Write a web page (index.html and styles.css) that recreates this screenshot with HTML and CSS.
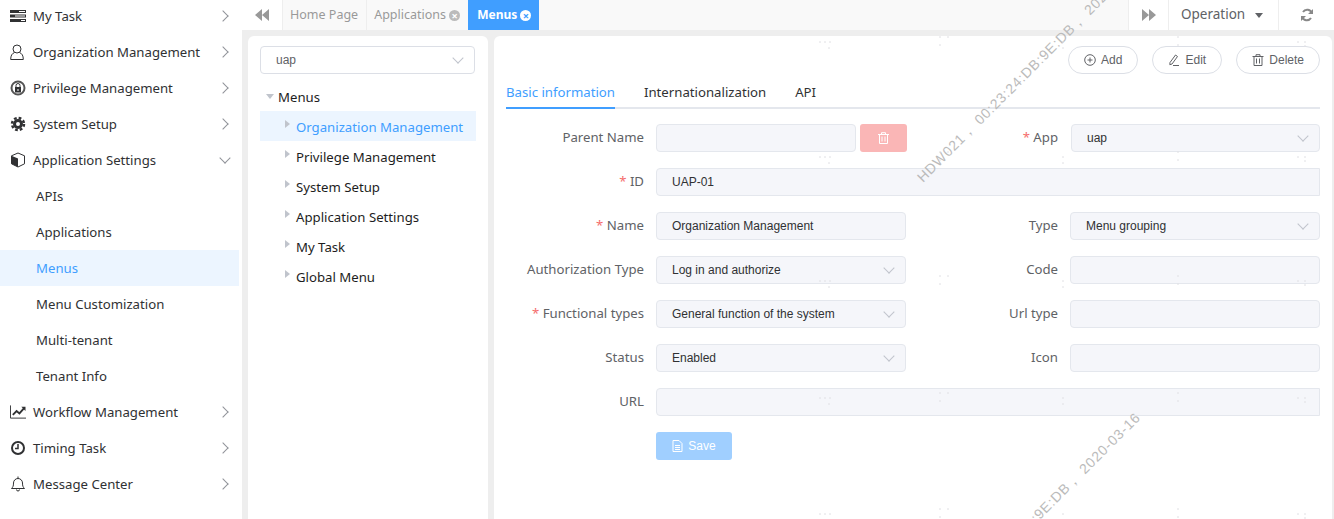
FILE: index.html

```html
<!DOCTYPE html>
<html>
<head>
    <title>Menus</title>
    <link rel="stylesheet" href="styles.css">
</head>
<body>
    <div class="sidebar">
        <div class="menu-item"><svg class="menu-icon" viewBox="0 0 16 14"><path d="M0 1h16v3H0zM0 5.500h16v3H0zM0 10h16v3H0z" fill="#303133"/><path d="M9 2h6v1H9zM5 6.500h10v1H5zM11 11h4v1h-4z" fill="#fff"/></svg><span>My Task</span><i class="arrow"></i></div>
        <div class="menu-item"><svg class="menu-icon" viewBox="0 0 16 16" fill="none" stroke="#303133"><circle cx="7" cy="5" r="4"/><path d="M4.500 8.500C2 9.500.7 11.500.7 15.500h12.600c0-4-1.300-6-3.800-7"/></svg><span>Organization Management</span><i class="arrow"></i></div>
        <div class="menu-item"><svg class="menu-icon" viewBox="0 0 16 16"><circle cx="8" cy="8" r="6.500" fill="none" stroke="#555" stroke-width="2"/><path d="M5 7h6v5.500H5z" fill="#303133"/><path d="M6 7V5.500a2 2 0 0 1 4 0V7" fill="none" stroke="#303133"/><path d="M7.500 9h1v2h-1z" fill="#fff"/></svg><span>Privilege Management</span><i class="arrow"></i></div>
        <div class="menu-item"><svg class="menu-icon" viewBox="0 0 16 16" fill="none" stroke="#303133"><circle cx="8" cy="8" r="3.500" stroke-width="3"/><circle cx="8" cy="8" r="6" stroke-width="2.500" stroke-dasharray="2.700 2"/></svg><span>System Setup</span><i class="arrow"></i></div>
        <div class="menu-item open"><svg class="menu-icon" viewBox="0 0 16 16"><path d="M8 1l6.500 2.800v8L8 15 1.500 11.800v-8z" fill="none" stroke="#303133"/><path d="M1.500 3.800L8 6.500V15L1.500 11.800z" fill="#303133"/></svg><span>Application Settings</span><i class="arrow"></i></div>
        <div class="menu-item sub">APIs</div>
        <div class="menu-item sub">Applications</div>
        <div class="menu-item sub active">Menus</div>
        <div class="menu-item sub">Menu Customization</div>
        <div class="menu-item sub">Multi-tenant</div>
        <div class="menu-item sub">Tenant Info</div>
        <div class="menu-item"><svg class="menu-icon" viewBox="0 0 17 14" fill="none" stroke="#303133"><path d="M.5 0v13.500H17"/><path d="M3 10l4-4 3 2.500L15 3" stroke-width="2"/><path d="M12 1.500h4.500V6z" fill="#303133" stroke="none"/></svg><span>Workflow Management</span><i class="arrow"></i></div>
        <div class="menu-item"><svg class="menu-icon" viewBox="0 0 16 16" fill="none" stroke="#303133"><circle cx="8" cy="8" r="6" stroke-width="2"/><path d="M8 4v4.500H5" stroke-width="1.500"/></svg><span>Timing Task</span><i class="arrow"></i></div>
        <div class="menu-item"><svg class="menu-icon" viewBox="0 0 16 16" fill="none" stroke="#303133"><path d="M1.500 12.500c1.500-1.500 2-2.500 2-5.500 0-2.500 2-4.500 4.500-4.500s4.500 2 4.500 4.500c0 3 .5 4 2 5.500z"/><path d="M8 .5v2M6.500 13.500a1.500 1.500 0 0 0 3 0"/></svg><span>Message Center</span><i class="arrow"></i></div>
    </div>

    <div class="main">
        <div class="topbar">
            <div class="top-btn first"><svg width="14" height="12" viewBox="0 0 14 12"><path d="M7 0v12L0 6zM14 0v12L7 6z" fill="#999"/></svg></div>
            <div class="tab">Home Page</div>
            <div class="tab">Applications <i class="tab-close">&times;</i></div>
            <div class="tab current">Menus <i class="tab-close">&times;</i></div>
            <div class="top-fill"></div>
            <div class="top-btn"><svg width="14" height="12" viewBox="0 0 14 12"><path d="M0 0v12l7-6zM7 0v12l7-6z" fill="#999"/></svg></div>
            <div class="top-btn operation">Operation <i class="caret"></i></div>
            <div class="top-btn refresh"><svg width="14" height="14" viewBox="0 0 14 14" fill="none" stroke="#888" stroke-width="2"><path d="M12 5.500A5 5 0 0 0 3 4M2 8.500A5 5 0 0 0 11 10"/><path d="M13 1v5H8zM1 13V8h5z" fill="#888" stroke="none"/></svg></div>
        </div>

        <div class="content">
            <div class="tree-panel">
                <div class="tree-select"><span>uap</span><i class="chevron"></i></div>
                <div class="tree-root"><i class="tri-down"></i>Menus</div>
                <div class="tree-row selected"><i class="tri"></i>Organization Management</div>
                <div class="tree-row"><i class="tri"></i>Privilege Management</div>
                <div class="tree-row"><i class="tri"></i>System Setup</div>
                <div class="tree-row"><i class="tri"></i>Application Settings</div>
                <div class="tree-row"><i class="tri"></i>My Task</div>
                <div class="tree-row"><i class="tri"></i>Global Menu</div>
            </div>

            <div class="form-panel">
                <div class="actions">
                    <div class="round-btn"><svg width="12" height="12" viewBox="0 0 12 12" fill="none" stroke="#606266"><circle cx="6" cy="6" r="5.300"/><path d="M6 3.500v5M3.500 6h5"/></svg>Add</div>
                    <div class="round-btn"><svg width="12" height="12" viewBox="0 0 12 12" fill="none" stroke="#606266"><path d="M2 8.500L7.500 1l2 1.500L4 10l-2.200.7zM5 11.500h6"/></svg>Edit</div>
                    <div class="round-btn"><svg width="12" height="12" viewBox="0 0 12 12" fill="none" stroke="#606266"><path d="M.5 2.500h11M4 2.500V.7h4v1.800M2 2.500v9h8v-9M4.500 4.500v5M7.500 4.500v5"/></svg>Delete</div>
                </div>
                <div class="tabs">
                    <div class="tabs-item current">Basic information</div>
                    <div class="tabs-item">Internationalization</div>
                    <div class="tabs-item">API</div>
                </div>
                <div class="form">
                    <div class="row">
                        <label class="field-label">Parent Name</label>
                        <div class="input parent"></div>
                        <div class="del-btn"><svg width="11" height="12" viewBox="0 0 11 12" fill="none" stroke="#fff"><path d="M0 2.500h11M3.500 2.500V.7h4v1.800M1.500 2.500v9h8v-9M4 4.500v5M7 4.500v5"/></svg></div>
                        <label class="field-label right"><b>*</b> App</label>
                        <div class="input select right-input app">uap<i class="chevron"></i></div>
                    </div>
                    <div class="row">
                        <label class="field-label"><b>*</b> ID</label>
                        <div class="input wide">UAP-01</div>
                    </div>
                    <div class="row">
                        <label class="field-label"><b>*</b> Name</label>
                        <div class="input half">Organization Management</div>
                        <label class="field-label right">Type</label>
                        <div class="input select right-input">Menu grouping<i class="chevron"></i></div>
                    </div>
                    <div class="row">
                        <label class="field-label">Authorization Type</label>
                        <div class="input select half">Log in and authorize<i class="chevron"></i></div>
                        <label class="field-label right">Code</label>
                        <div class="input right-input"></div>
                    </div>
                    <div class="row">
                        <label class="field-label"><b>*</b> Functional types</label>
                        <div class="input select half">General function of the system<i class="chevron"></i></div>
                        <label class="field-label right">Url type</label>
                        <div class="input right-input"></div>
                    </div>
                    <div class="row">
                        <label class="field-label">Status</label>
                        <div class="input select half">Enabled<i class="chevron"></i></div>
                        <label class="field-label right">Icon</label>
                        <div class="input right-input"></div>
                    </div>
                    <div class="row">
                        <label class="field-label">URL</label>
                        <div class="input wide"></div>
                    </div>
                    <div class="row">
                        <div class="save-btn"><svg width="11" height="12" viewBox="0 0 11 12" fill="none" stroke="#fff"><path d="M1 .5h6l3 3v8H1zM3 5.500h5M3 7.500h5M3 9.500h5"/></svg>Save</div>
                    </div>
                </div>
            </div>
        </div>
    </div>

    <!-- watermark over the whole page -->
    <div class="watermark-layer">
        <div class="watermark one">HDW021， 00:23:24:DB:9E:DB， 2020-03-16</div>
        <div class="watermark two">HDW021， 00:23:24:DB:9E:DB， 2020-03-16</div>
        <svg class="specks" width="1334" height="519">
            <defs>
                <path id="speck" d="M819 0h2M824 0h2M829 0h2M828 6h2M939 -5h2M947 -5h2M939 3h2M1062 0h2M1062 6h2M1177 -5h2M1177 3h2M1297 0h2M1304 0h2M1304 4h2" stroke="#e0e0e4"/>
            </defs>
            <use href="#speck" y="42"/>
            <use href="#speck" y="157"/>
            <use href="#speck" y="281"/>
            <use href="#speck" y="398"/>
            <use href="#speck" y="514"/>
        </svg>
    </div>
</body>
</html>
```

FILE: styles.css

```css
* {
	box-sizing: border-box;
}

body {
	margin: 0;
	height: 519px;
	overflow: hidden;
	display: flex;
	background-color: #eeeeee;
	font-family: "Noto Sans", Arial, sans-serif;
	font-size: 13.2px;
	color: #303133;
}

i {
	font-style: normal;
}

/* left menu */
.sidebar {
	width: 242px;
	flex: none;
	height: 519px;
	padding: 0 3px 0 0;
	background-color: #fff;
	overflow: hidden;
}

.menu-item {
	height: 36px;
	display: flex;
	align-items: center;
	padding-left: 10px;
	color: #303133;
	position: relative;
	top: -2px;
}

.menu-item span {
	flex: 1;
}

.menu-icon {
	width: 16px;
	height: 16px;
	margin-right: 7px;
	flex: none;
}

.menu-item.sub {
	padding-left: 36px;
}

.menu-item.active {
	background-color: #ecf5ff;
	color: #409eff;
}

.arrow {
	width: 8px;
	height: 8px;
	margin-right: 12px;
	border-top: 1px solid #909399;
	border-right: 1px solid #909399;
	transform: rotate(45deg);
}

.open .arrow {
	transform: rotate(135deg);
	margin-right: 10px;
	margin-top: -4px;
}

/* top bar */
.main {
	flex: 1;
	min-width: 0;
}

.topbar {
	height: 30px;
	display: flex;
	background-color: #fff;
}

.top-btn {
	display: flex;
	align-items: center;
	justify-content: center;
	width: 40px;
	border-left: 1px solid #eee;
	color: #606266;
}

.top-btn.first {
	border-left: none;
}

.top-btn.operation {
	width: 110px;
	justify-content: flex-start;
	padding-left: 12px;
	padding-bottom: 2px;
	font-size: 13.5px;
}

.top-btn.refresh {
	width: 56px;
}

.caret {
	margin-left: 10px;
	margin-top: 2px;
	border-top: 5px solid #606266;
	border-left: 4px solid transparent;
	border-right: 4px solid transparent;
}

.tab {
	display: flex;
	align-items: center;
	padding: 0 8px 2px 7px;
	border-left: 1px solid #eee;
	background-color: #f9f9f9;
	color: #999;
	font-size: 12.5px;
	white-space: pre;
}

.tab.current {
	padding-left: 9px;
	background-color: #409eff;
	border-left: none;
	color: #fff;
	font-weight: bold;
	font-size: 12px;
}

.tab-close {
	width: 11px;
	height: 11px;
	margin-top: 2px;
	border-radius: 50%;
	background-color: #bbb;
	color: #fff;
	font-size: 11px;
	line-height: 11px;
	text-align: center;
	font-weight: bold;
}

.tab.current .tab-close {
	background-color: #fff;
	color: #409eff;
}

.top-fill {
	flex: 1;
	background-color: #f9f9f9;
}

/* panels */
.content {
	display: flex;
	gap: 6px;
	padding: 6px 2px 0 6px;
}

.tree-panel {
	width: 240px;
	height: 483px;
	flex: none;
	padding: 10px 12px;
	background-color: #fff;
	border-radius: 6px 6px 0 0;
}

.tree-select {
	width: 215px;
	height: 28px;
	padding: 0 15px;
	display: flex;
	align-items: center;
	justify-content: space-between;
	border: 1px solid #dcdfe6;
	border-radius: 4px;
	font-family: "Liberation Sans", Arial, sans-serif;
	font-size: 12px;
	color: #606266;
}

.chevron {
	width: 8px;
	height: 8px;
	border-right: 1px solid #c0c4cc;
	border-bottom: 1px solid #c0c4cc;
	transform: rotate(45deg);
	margin: -4px -3px 0 0;
	flex: none;
}

.tree-root {
	height: 27px;
	margin-top: 10px;
	padding-left: 6px;
	padding-bottom: 2px;
	display: flex;
	align-items: center;
	color: #1d1d1d;
}

.tri-down {
	margin-right: 4px;
	border-top: 5px solid #c0c4cc;
	border-left: 4px solid transparent;
	border-right: 4px solid transparent;
}

.tree-row {
	width: 216px;
	height: 30px;
	padding-left: 25px;
	padding-top: 2px;
	display: flex;
	align-items: center;
	color: #1d1d1d;
}

.tree-row.selected {
	background-color: #ecf5ff;
	color: #409eff;
}

.tri {
	margin: -6px 6px 0 0;
	border-left: 5px solid #c0c4cc;
	border-top: 4px solid transparent;
	border-bottom: 4px solid transparent;
}

.form-panel {
	flex: 1;
	height: 483px;
	padding: 10px 12px;
	background-color: #fff;
	border-radius: 6px 6px 0 0;
}

.actions {
	display: flex;
	justify-content: flex-end;
	gap: 14px;
}

.round-btn {
	min-width: 70px;
	height: 28px;
	padding: 0 15px;
	display: flex;
	align-items: center;
	justify-content: center;
	gap: 5px;
	border: 1px solid #dcdfe6;
	border-radius: 14px;
	font-family: "Liberation Sans", Arial, sans-serif;
	font-size: 12px;
	color: #606266;
}

.tabs {
	height: 35px;
	display: flex;
	gap: 29px;
	border-bottom: 2px solid #e4e7ed;
}

.tabs-item {
	height: 35px;
	line-height: 36px;
	color: #303133;
}

.tabs-item.current {
	color: #409eff;
	border-bottom: 2px solid #409eff;
}

.form {
	margin-top: 15px;
}

.row {
	display: flex;
	height: 28px;
	margin-bottom: 16px;
	align-items: center;
}

.field-label {
	width: 138px;
	margin-right: 12px;
	padding-bottom: 2px;
	text-align: right;
	color: #606266;
	flex: none;
	white-space: nowrap;
}

.field-label b {
	color: #f56c6c;
	font-weight: normal;
}

.field-label.right {
	width: 152px;
}

.input {
	height: 28px;
	padding: 0 15px;
	display: flex;
	align-items: center;
	justify-content: space-between;
	background-color: #f5f6fa;
	border: 1px solid #e4e7ed;
	border-radius: 4px;
	font-family: "Liberation Sans", Arial, sans-serif;
	font-size: 12px;
	color: #303133;
}

.input.parent {
	width: 200px;
}

.input.half {
	width: 250px;
}

.input.wide {
	flex: 1;
	border-radius: 4px 0 0 4px;
}

.input.right-input {
	width: 250px;
}

.input.app {
	width: 249px;
	margin-left: 1px;
}

.del-btn {
	width: 47px;
	height: 28px;
	margin: 0 -1px 0 4px;
	display: flex;
	align-items: center;
	justify-content: center;
	background-color: #fab6b6;
	border-radius: 3px;
}

.save-btn {
	width: 76px;
	height: 28px;
	margin-left: 150px;
	display: flex;
	align-items: center;
	justify-content: center;
	gap: 5px;
	background-color: #a0cfff;
	border-radius: 3px;
	color: #fff;
	font-family: "Liberation Sans", Arial, sans-serif;
	font-size: 12px;
}

/* watermark */
.watermark-layer {
	position: absolute;
	left: 0;
	top: 0;
	width: 1334px;
	height: 519px;
	overflow: hidden;
	pointer-events: none;
}

.watermark {
	position: absolute;
	width: 330px;
	font-family: "Liberation Sans", Arial, sans-serif;
	font-size: 14px;
	letter-spacing: 0.8px;
	line-height: 16px;
	white-space: nowrap;
	color: #bbbbbb;
	transform: rotate(-45deg);
	transform-origin: left bottom;
}

.watermark.one {
	left: 925px;
	top: 169px;
}

.watermark.two {
	left: 920px;
	top: 628px;
}

.specks {
	position: absolute;
	left: 0;
	top: 0;
}
```
